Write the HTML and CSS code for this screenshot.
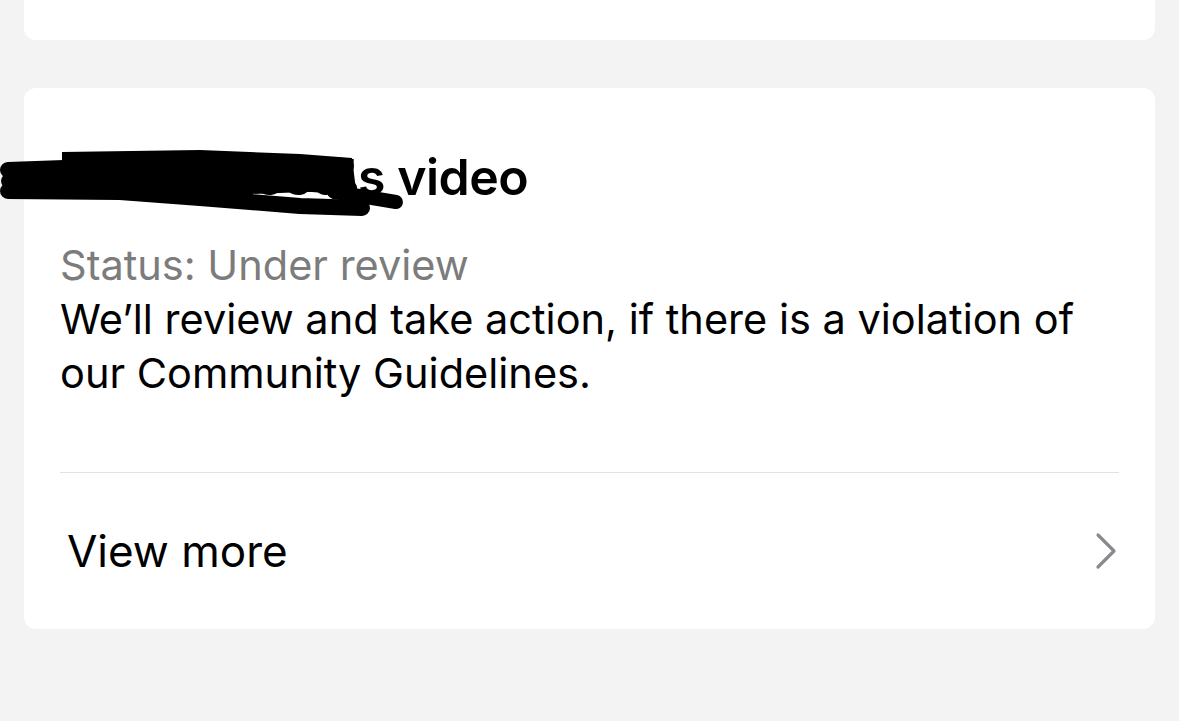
FILE: index.html
```html
<!DOCTYPE html>
<html lang="en">
<head>
    <meta charset="UTF-8">
    <meta name="viewport" content="width=device-width, initial-scale=1.0">
    <title>Reports</title>
    <link rel="stylesheet" href="styles.css">
</head>
<body>
    <div class="list">
        <div class="card card-top"></div>

        <div class="card report">
            <div class="report-body">
                <h2 class="report-title">Daniel Reed's video</h2>
                <!-- marker scribble over the account name -->
                <svg class="redact" width="410" height="72" viewBox="0 0 410 72">
                    <path d="M62 6 L200 4 L300 8 L352 12 L356 44 L200 50 L62 46 Z" fill="#000"/>
                    <g fill="none" stroke="#000" stroke-linecap="round" stroke-linejoin="round">
                        <path d="M8 24 L120 20 L250 16 L346 20" stroke-width="16"/>
                        <path d="M8 35 L150 33 L300 38 L350 42" stroke-width="14"/>
                        <path d="M8 45 L120 46 L200 52 L300 60 L362 62" stroke-width="16"/>
                        <path d="M334 46 L372 52 L396 56" stroke-width="14"/>
                        <path d="M352 58 L360 62" stroke-width="12"/>
                    </g>
                </svg>
                <p class="status">Status: Under review</p>
                <p class="note">We’ll review and take action, if there is a violation of our Community Guidelines.</p>
            </div>
            <a class="row-link" href="#">
                <span>View more</span>
                <svg class="chevron" width="22" height="38" viewBox="0 0 22 38">
                    <path d="M3 3 L19 19 L3 35" fill="none" stroke="#8a8a8e" stroke-width="3.2" stroke-linecap="round" stroke-linejoin="round"/>
                </svg>
            </a>
        </div>
    </div>
</body>
</html>
```

FILE: styles.css
```css
body {
    margin: 0;
    background-color: #f3f3f3;
    font-family: Inter, "Noto Sans", sans-serif;
    color: #000;
}
.list {
    display: flex;
    flex-direction: column;
    gap: 48px;
    padding: 0 24px;
}
.card {
    background-color: #fff;
    border-radius: 12px;
}
.card-top {
    height: 40px;
    border-radius: 0 0 12px 12px;
}
.report-body {
    position: relative;
    padding: 59px 36px 72px;
}
.report-title {
    margin: 0;
    font-size: 50px;
    line-height: 60px;
    font-weight: 600;
    letter-spacing: -0.5px;
    padding-left: 2px;
}
.redact {
    position: absolute;
    left: -24px;
    top: 58px;
}
.status {
    margin: 31px 0 0;
    font-size: 41.5px;
    line-height: 54px;
    color: #7c7c7c;
}
.note {
    margin: 0;
    font-size: 41.5px;
    line-height: 54px;
}
.row-link {
    display: flex;
    align-items: center;
    justify-content: space-between;
    height: 156px;
    margin: 0 36px;
    padding: 0 2px 0 7px;
    border-top: 1px solid #e2e2e2;
    color: #000;
    text-decoration: none;
    font-size: 44px;
}
.chevron {
    display: block;
}
```
